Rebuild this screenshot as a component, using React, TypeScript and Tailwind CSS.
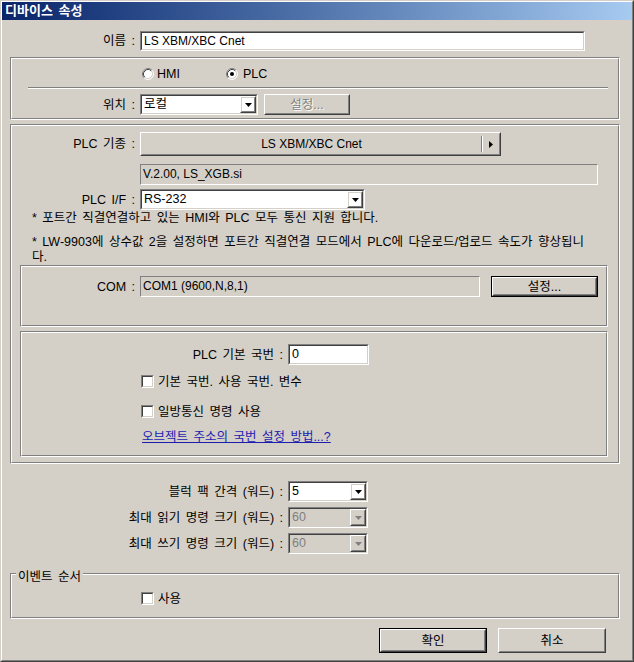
import React from "react";

const FONT = "font-['Liberation_Sans','Noto_Sans_CJK_KR',sans-serif]";
const GRAYTEXT = "text-[#808080] [text-shadow:1px_1px_0_#ffffff]";
const LATIN = "[word-spacing:0px] text-[12px]";

type Box = { className?: string; inner?: string; children?: React.ReactNode };

// 움푹 들어간 2px 테두리 (입력창, 콤보, 체크박스)
function Sunken({ className = "", inner = "", children }: Box) {
  return (
    <div className={`border border-t-[#808080] border-l-[#808080] border-b-white border-r-white ${className}`}>
      <div className={`h-full w-full border border-t-[#404040] border-l-[#404040] border-b-[#d4d0c8] border-r-[#d4d0c8] ${inner}`}>
        {children}
      </div>
    </div>
  );
}

// 튀어나온 2px 테두리 (버튼)
function Raised({ className = "", inner = "", children }: Box) {
  return (
    <div className={`border border-t-white border-l-white border-b-[#404040] border-r-[#404040] ${className}`}>
      <div className={`h-full w-full border border-t-[#d4d0c8] border-l-[#d4d0c8] border-b-[#808080] border-r-[#808080] ${inner}`}>
        {children}
      </div>
    </div>
  );
}

// 에칭된 그룹 박스
function Group({ className = "", legend, children }: Box & { legend?: string }) {
  return (
    <div className={`relative border border-t-[#808080] border-l-[#808080] border-b-white border-r-white ${className}`}>
      <div className="h-full w-full border border-t-white border-l-white border-b-[#808080] border-r-[#808080]">{children}</div>
      {legend && <span className="absolute left-[5px] top-[-4px] bg-[#d4d0c8] px-[2px] leading-[14px]">{legend}</span>}
    </div>
  );
}

function Static({ className = "", children }: Box) {
  return (
    <div className={`border border-t-[#808080] border-l-[#808080] border-b-white border-r-white pl-[2px] leading-[19px] ${LATIN} ${className}`}>
      {children}
    </div>
  );
}

function Button({ className = "", label, isDefault, disabled }: { className?: string; label: string; isDefault?: boolean; disabled?: boolean }) {
  const body = (
    <Raised className="h-full w-full" inner="flex items-center justify-center">
      <span className={disabled ? GRAYTEXT : ""}>{label}</span>
    </Raised>
  );
  if (isDefault) return <div className={`border border-black ${className}`}>{body}</div>;
  return <div className={className}>{body}</div>;
}

function Combo({ className = "", value, disabled }: { className?: string; value: string; disabled?: boolean }) {
  return (
    <Sunken className={className} inner={`flex ${disabled ? "bg-[#d4d0c8]" : "bg-white"}`}>
      <span className={`flex-1 pl-[2px] leading-[17px] ${disabled ? "text-[#808080]" : ""}`}>{value}</span>
      <Raised className="h-[17px] w-[16px] shrink-0" inner="flex items-center justify-center">
        <svg width="7" height="4" viewBox="0 0 7 4">
          <path d="M0 0h7L3.5 4z" fill={disabled ? "#808080" : "#000"} />
        </svg>
      </Raised>
    </Sunken>
  );
}

function Radio({ checked }: { checked?: boolean }) {
  return (
    <svg width="12" height="12" viewBox="0 0 12 12" className="shrink-0">
      <circle cx="6" cy="6" r="5" fill="#fff" />
      <path d="M2.11 9.89A5.5 5.5 0 0 1 9.89 2.11" stroke="#808080" fill="none" />
      <path d="M9.89 2.11A5.5 5.5 0 0 1 2.11 9.89" stroke="#fff" fill="none" />
      <path d="M2.82 9.18A4.5 4.5 0 0 1 9.18 2.82" stroke="#404040" fill="none" />
      <path d="M9.18 2.82A4.5 4.5 0 0 1 2.82 9.18" stroke="#d4d0c8" fill="none" />
      {checked && <circle cx="6" cy="6" r="2" fill="#000" />}
    </svg>
  );
}

function Check({ label }: { label: string }) {
  return (
    <div className="flex h-[13px] items-center">
      <Sunken className="h-[13px] w-[13px] shrink-0" inner="bg-white" />
      <span className="ml-[4px] leading-[14px]">{label}</span>
    </div>
  );
}

export default function App() {
  return (
    <div className={`${FONT} h-[662px] w-[634px] border border-t-[#d4d0c8] border-l-[#d4d0c8] border-b-[#404040] border-r-[#404040] bg-[#d4d0c8] text-[12.5px] leading-[14px] text-black [word-spacing:2px]`}>
      <div className="h-full w-full border border-t-white border-l-white border-b-[#808080] border-r-[#808080]">
        {/* 타이틀 바 */}
        <div className="flex h-[18px] items-center bg-gradient-to-r from-[#0a246a] to-[#a6caf0] pl-[3px] text-[13px] font-bold text-white">
          디바이스 속성
        </div>

        {/* 이름 */}
        <div className="mt-[11px] flex h-[20px] items-center">
          <div className="w-[133px] text-right">이름 :</div>
          <Sunken className="ml-[5px] h-[20px] w-[445px]" inner={`bg-white pl-[2px] leading-[16px] ${LATIN}`}>
            LS XBM/XBC Cnet
          </Sunken>
        </div>

        {/* HMI / PLC, 위치 */}
        <Group className="ml-[8px] mt-[6px] h-[63px] w-[610px]">
          <div className="ml-[130px] mt-[9px] flex h-[12px] items-center">
            <div className="flex w-[84px] items-center gap-[3px]">
              <Radio />
              <span>HMI</span>
            </div>
            <div className="flex items-center gap-[5px]">
              <Radio checked />
              <span>PLC</span>
            </div>
          </div>
          <div className="ml-[16px] mt-[7px] h-[2px] w-[580px] border-t border-b border-t-[#808080] border-b-white" />
          <div className="mt-[5px] flex h-[21px] items-center">
            <div className="w-[123px] text-right">위치 :</div>
            <Combo className="ml-[5px] h-[21px] w-[118px]" value="로컬" />
            <Button className="ml-[6px] h-[21px] w-[86px]" label="설정..." disabled />
          </div>
        </Group>

        {/* PLC 설정 */}
        <Group className="ml-[8px] mt-[4px] h-[340px] w-[610px]">
          <div className="mt-[6px] flex h-[24px] items-center">
            <div className="w-[123px] text-right">PLC 기종 :</div>
            <Raised className="ml-[5px] h-[24px] w-[361px]" inner="flex items-center">
              <span className={`flex-1 text-center ${LATIN}`}>LS XBM/XBC Cnet</span>
              <div className="h-[16px] w-[2px] border-l border-r border-l-[#808080] border-r-white" />
              <div className="flex w-[16px] items-center justify-center">
                <svg width="4" height="7" viewBox="0 0 4 7">
                  <path d="M0 0l4 3.5L0 7z" fill="#000" />
                </svg>
              </div>
            </Raised>
          </div>
          <Static className="ml-[128px] mt-[8px] h-[21px] w-[458px]">V.2.00, LS_XGB.si</Static>
          <div className="mt-[4px] flex h-[21px] items-center">
            <div className="w-[123px] text-right">PLC I/F :</div>
            <Combo className="ml-[5px] h-[21px] w-[225px]" value="RS-232" />
          </div>
          <div className="mt-[1px] h-[15px] pl-[20px] leading-[15px]">* 포트간 직결연결하고 있는 HMI와 PLC 모두 통신 지원 합니다.</div>
          <div className="mt-[9px] pl-[20px] leading-[15px] whitespace-nowrap">
            * LW-9903에 상수값 2을 설정하면 포트간 직결연결 모드에서 PLC에 다운로드/업로드 속도가 향상됩니
            <br />
            다.
          </div>

          <Group className="ml-[8px] h-[62px] w-[588px]">
            <div className="mt-[9px] flex h-[21px] items-center">
              <div className="w-[113px] text-right">COM :</div>
              <Static className="ml-[5px] h-[21px] w-[340px]">COM1 (9600,N,8,1)</Static>
              <Button className="ml-[11px] h-[21px] w-[107px]" label="설정..." isDefault />
            </div>
          </Group>

          <Group className="ml-[8px] mt-[4px] h-[126px] w-[588px]">
            <div className="mt-[11px] flex h-[21px] items-center">
              <div className="w-[261px] text-right">PLC 기본 국번 :</div>
              <Sunken className="ml-[5px] h-[21px] w-[81px]" inner="bg-white pl-[2px] leading-[17px]">
                0
              </Sunken>
            </div>
            <div className="mt-[10px] pl-[119px]">
              <Check label="기본 국번. 사용 국번. 변수" />
            </div>
            <div className="mt-[17px] pl-[119px]">
              <Check label="일방통신 명령 사용" />
            </div>
            <div className="mt-[12px] pl-[120px]">
              <span className="text-[#1c1cb0] underline">오브젝트 주소의 국번 설정 방법...?</span>
            </div>
          </Group>
        </Group>

        {/* 블럭 설정 */}
        <div className="mt-[17px] flex h-[21px] items-center">
          <div className="w-[281px] text-right">블럭 팩 간격 (워드) :</div>
          <Combo className="ml-[5px] h-[21px] w-[80px]" value="5" />
        </div>
        <div className="mt-[5px] flex h-[21px] items-center">
          <div className="w-[281px] text-right">최대 읽기 명령 크기 (워드) :</div>
          <Combo className="ml-[5px] h-[21px] w-[80px]" value="60" disabled />
        </div>
        <div className="mt-[5px] flex h-[21px] items-center">
          <div className="w-[281px] text-right">최대 쓰기 명령 크기 (워드) :</div>
          <Combo className="ml-[5px] h-[21px] w-[80px]" value="60" disabled />
        </div>

        {/* 이벤트 순서 */}
        <Group className="ml-[8px] mt-[19px] h-[46px] w-[610px]" legend="이벤트 순서">
          <div className="mt-[17px] pl-[129px]">
            <Check label="사용" />
          </div>
        </Group>

        {/* 확인 / 취소 */}
        <div className="mt-[9px] flex">
          <Button className="ml-[377px] h-[25px] w-[108px]" label="확인" isDefault />
          <Button className="ml-[11px] h-[25px] w-[108px]" label="취소" />
        </div>
      </div>
    </div>
  );
}
